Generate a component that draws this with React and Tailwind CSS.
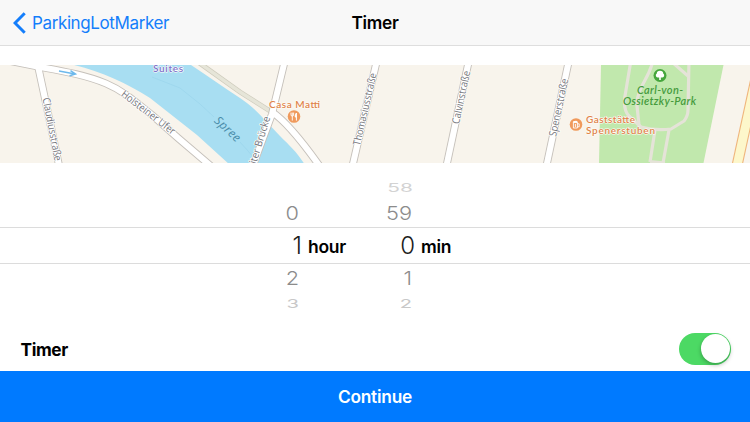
import React from 'react';

const ROADS = [
  'M0 59 L40 67 C62 71 86 75 106 83.5 C124 91 138 104 152 115 L178 138 L212 167',
  'M38 66 L47 108 L60 170',
  'M285 60 L272 114 L252 168',
  'M272 112 Q290 124 321 168',
  'M377 60 L352 168',
  'M469 60 L446 168',
  'M569 60 L546 168',
];

const PARK_PATHS = [
  'M631 60 L625 96 Q623 110 629 116 L641 127 Q656 131 671 129 L684 121 Q688 116 688 110 L689 60',
  'M653 60 C650 78 636 88 637 106 L639 125',
  'M672 62 L688 76',
  'M655 130 L650 162 M669 130 L663 163 M650 161.5 L665 163',
];

const hours = { far: '', above: '0', selected: '1', below: '2', last: '3' };
const minutes = { far: '58', above: '59', selected: '0', below: '1', last: '2' };

function ParkingMap() {
  return (
    <svg className="block w-full h-[98px] shrink-0" viewBox="0 65 750 98">
      <rect x="0" y="65" width="750" height="98" fill="#f8f4ec" />
      <path
        d="M70 64 C100 71 125 82 150 98 L197 135 L230 165 H305 C297 152 290 146 280 136 C264 119 254 107 240 98 C222 86 206 75 188 63 Z"
        fill="#a8def2"
      />
      <path d="M152 77 L180 88 L200 104 L214 117 M240 142 L256 160" fill="none" stroke="#9cd5ec" strokeWidth="0.8" />

      <path d="M198 62 L240 92 L270 111" fill="none" stroke="#cfccbd" strokeWidth="5" />
      <path d="M198 62 L240 92 L270 111" fill="none" stroke="#e6e5d8" strokeWidth="3.4" />

      <path d="M601 65 H723.5 L703.5 163 H599 Z" fill="#c1e8ad" />
      <g fill="none" stroke="#e5e3d8" strokeWidth="3.2" strokeLinejoin="round">
        {PARK_PATHS.map((d) => <path key={d} d={d} />)}
      </g>

      <g fill="none" stroke="#c5c0ba" strokeWidth="7.8">
        {ROADS.map((d) => <path key={d} d={d} />)}
      </g>
      <g fill="none" stroke="#ffffff" strokeWidth="6">
        {ROADS.map((d) => <path key={d} d={d} />)}
      </g>
      <path d="M760 60 L736.5 168" fill="none" stroke="#efb57c" strokeWidth="11" />
      <path d="M760 60 L736.5 168" fill="none" stroke="#fdf7cb" strokeWidth="8.8" />

      <path d="M59 71 L75 74 M70.5 70.6 L75.5 74 L69.5 75.8" fill="none" stroke="#6db9ec" strokeWidth="1.5" />

      <g className="font-['Open_Sans',sans-serif]" fontSize="10.5" fill="#74757b" stroke="#ffffff" strokeWidth="1.6" paintOrder="stroke" strokeLinejoin="round">
        <text transform="translate(42.5 98.5) rotate(79)" textLength="64" lengthAdjust="spacingAndGlyphs">Claudiusstraße</text>
        <text transform="translate(120.5 95.5) rotate(37.5)" textLength="65" lengthAdjust="spacingAndGlyphs">Holsteiner Ufer</text>
        <text transform="translate(256 164.5) rotate(-73)" textLength="49" lengthAdjust="spacingAndGlyphs">iter Brücke</text>
        <text transform="translate(360 146) rotate(-77)" textLength="74" lengthAdjust="spacingAndGlyphs">Thomasiusstraße</text>
        <text transform="translate(459 124.5) rotate(-78)" textLength="54" lengthAdjust="spacingAndGlyphs">Calvinstraße</text>
        <text transform="translate(556 137) rotate(-78)" textLength="59" lengthAdjust="spacingAndGlyphs">Spenerstraße</text>
      </g>

      <text className="font-['Open_Sans',sans-serif]" transform="translate(213.5 121.5) rotate(43)" fontSize="12" fontStyle="italic" fill="#478ba8" textLength="31">Spree</text>

      <g className="font-[Lato,sans-serif]" fontSize="10" fontWeight="600" stroke="#fffdf9" strokeWidth="1.2" paintOrder="stroke" strokeLinejoin="round">
        <text x="153" y="72" fill="#7d72cc" textLength="30">Suites</text>
        <text x="269" y="108" fill="#e0834a" textLength="51">Casa Matti</text>
        <text x="586" y="123.4" fill="#e0834a" textLength="49">Gaststätte</text>
        <text x="586" y="133.6" fill="#e0834a" textLength="69">Spenerstuben</text>
      </g>
      <g className="font-[Lato,sans-serif]" fontSize="11" fontStyle="italic" fontWeight="600" fill="#469b3d">
        <text x="637" y="93.5" textLength="46">Carl-von-</text>
        <text x="623" y="105" textLength="73">Ossietzky-Park</text>
      </g>

      <circle cx="294" cy="116.5" r="6.3" fill="#f09a5c" />
      <g fill="none" stroke="#ffffff" strokeLinecap="round">
        <path d="M291 113 V115.5 Q292.3 116.8 293.6 115.5 V113 M292.3 113 V120.2" strokeWidth="0.9" />
        <path d="M296.4 120.2 V113 Q295 114.5 295.2 117 H296.4" strokeWidth="1" fill="#ffffff" />
      </g>

      <circle cx="576" cy="124.5" r="6.3" fill="#f09a5c" />
      <path d="M573.4 122.6 H577.4 V128 H573.4 Z M577.4 123.8 H579.2 V126.8 H577.4 M575.4 124 V127" fill="none" stroke="#ffffff" strokeWidth="0.9" />
      <path d="M572.8 122.8 Q572.6 120.7 574.6 121 Q577.5 119.8 578 122.8 Z" fill="#ffffff" />

      <circle cx="660" cy="75.5" r="6.5" fill="#45a63c" />
      <path d="M659.2 80 V77.6 H657.6 A2.2 2.2 0 0 1 656.8 73.6 A3.2 2.8 0 0 1 663.2 73.6 A2.2 2.2 0 0 1 662.4 77.6 H660.8 V80 Z" fill="#ffffff" />
    </svg>
  );
}

function Wheel({ values, unit }) {
  return (
    <div className="flex w-[113px] flex-col">
      <span className="h-[23px] w-[49px] origin-right scale-x-[1.1] scale-y-[0.65] pt-[1px] text-right text-[19px] leading-[22px] text-[#d3d3d3]">{values.far}</span>
      <span className="h-[29px] w-[48px] origin-right scale-x-[1.06] scale-y-[0.93] text-right text-[20.5px] font-light leading-[28px] text-[#8c8c8c]">{values.above}</span>
      <div className="flex h-[36px] items-center">
        <span className="w-[51px] text-right text-[24px] font-light leading-[36px] text-[#1c1c1c]">{values.selected}</span>
        <span className="pl-[6px] pt-[2px] text-[17.5px] font-semibold tracking-[-0.3px] text-black">{unit}</span>
      </div>
      <span className="h-[29px] w-[48px] origin-right scale-x-[1.06] scale-y-[0.93] text-right text-[20.5px] font-light leading-[29px] text-[#8c8c8c]">{values.below}</span>
      <span className="h-[22px] w-[48px] origin-right scale-x-[1.06] scale-y-[0.65] text-right text-[19px] leading-[22px] text-[#c8c8c8]">{values.last}</span>
    </div>
  );
}

export default function App() {
  return (
    <div className="flex h-[422px] w-[750px] flex-col overflow-hidden bg-white font-[Inter,sans-serif]">
      <header className="grid h-[46px] shrink-0 grid-cols-3 items-center border-b border-[#dedede] bg-[#f8f8f8]">
        <button className="flex items-center gap-[6px] pl-[13px] pt-px text-[#147efb]">
          <svg width="13" height="22" viewBox="0 0 13 22" fill="none" stroke="currentColor" strokeWidth="3">
            <path d="M11.7 1.3 L2 11 L11.7 20.7" />
          </svg>
          <span className="pt-px text-[17px] tracking-[-0.38px]">ParkingLotMarker</span>
        </button>
        <h1 className="pt-px text-center text-[17.3px] font-semibold tracking-[-0.3px] text-black">Timer</h1>
      </header>

      <div className="h-[19px] shrink-0" />
      <ParkingMap />

      <div className="flex h-[163px] shrink-0 flex-col pt-[13px]">
        <div className="grid">
          <div className="col-start-1 row-start-1 mt-[51px] h-[37px] border-y border-[#dcdcdc]" />
          <div className="col-start-1 row-start-1 flex pl-[251px]">
            <Wheel values={hours} unit="hour" />
            <Wheel values={minutes} unit="min" />
          </div>
        </div>
      </div>

      <div className="flex h-[45px] shrink-0 items-center justify-between pl-[20.5px] pr-[19px]">
        <span className="pt-[3px] text-[17.3px] font-bold tracking-[-0.4px] text-black">Timer</span>
        <div className="flex h-[32px] w-[52px] items-center justify-end rounded-full bg-[#4cd964] pr-[1.5px]">
          <div className="h-[28.5px] w-[28.5px] rounded-full bg-white shadow-[0_2px_4px_rgba(0,0,0,0.28)]" />
        </div>
      </div>

      <button className="h-[51px] shrink-0 bg-[#007aff] pt-px text-[17.3px] font-semibold tracking-[-0.2px] text-white">Continue</button>
    </div>
  );
}
